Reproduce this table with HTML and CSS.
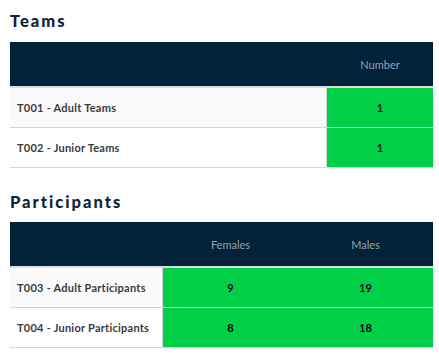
FILE: index.html
```html
<!DOCTYPE html>
<html>
<head>
<meta charset="utf-8">
<link rel="stylesheet" href="styles.css">
</head>
<body>
<div class="page">
  <h2 class="title title-teams">Teams</h2>
  <table class="stats">
    <colgroup><col class="c-label-1"><col class="c-val-1"></colgroup>
    <thead>
      <tr><th></th><th>Number</th></tr>
    </thead>
    <tbody>
      <tr class="odd"><td class="label">T001 - Adult Teams</td><td class="val">1</td></tr>
      <tr class="even"><td class="label">T002 - Junior Teams</td><td class="val">1</td></tr>
    </tbody>
  </table>

  <h2 class="title title-part">Participants</h2>
  <table class="stats">
    <colgroup><col class="c-label-2"><col class="c-val-2"><col class="c-val-2"></colgroup>
    <thead>
      <tr><th></th><th>Females</th><th>Males</th></tr>
    </thead>
    <tbody>
      <tr class="odd"><td class="label">T003 - Adult Participants</td><td class="val">9</td><td class="val">19</td></tr>
      <tr class="even"><td class="label">T004 - Junior Participants</td><td class="val">8</td><td class="val">18</td></tr>
    </tbody>
  </table>
</div>
</body>
</html>
```

FILE: styles.css
```css
html, body {
  margin: 0;
  padding: 0;
  background: #ffffff;
}
.page {
  width: 423px;
  padding: 0 6px 0 10px;
  font-family: "Lato", "Noto Sans", sans-serif;
}
.title {
  margin: 0;
  font-family: "Lato", sans-serif;
  font-weight: 900;
  font-size: 16.5px;
  letter-spacing: 2px;
  color: #0d2340;
  line-height: 20px;
}
.title-teams {
  padding-top: 11px;
  height: 20px;
  margin-bottom: 11px;
}
.title-part {
  padding-top: 24px;
  height: 20px;
  margin-bottom: 10px;
}
.stats {
  width: 423px;
  border-collapse: separate;
  border-spacing: 0;
  table-layout: fixed;
}
.c-label-1 { width: 317px; }
.c-val-1 { width: 106px; }
.c-label-2 { width: 153px; }
.c-val-2 { width: 135px; }
.stats thead th {
  background: #022239;
  height: 44px;
  padding: 0;
  font-weight: 400;
  font-size: 11px;
  color: #8fa3b3;
  text-align: center;
  border-bottom: 2px solid #dcdfe2;
  vertical-align: middle;
}
.stats td {
  height: 39px;
  padding: 0;
  border-bottom: 1px solid #d2d7db;
  font-size: 11px;
  vertical-align: middle;
}
.stats td.label {
  padding-left: 7px;
  font-weight: 700;
  letter-spacing: 0.25px;
  color: #3b3b3b;
  border-right: 1px solid #d2d7db;
}
.stats tr.odd td.label { background: #fafafa; }
.stats tr.even td.label { background: #ffffff; }
.stats td.val {
  background: #00cf47;
  text-align: center;
  font-weight: 700;
  color: #0a0a0a;
}
```
